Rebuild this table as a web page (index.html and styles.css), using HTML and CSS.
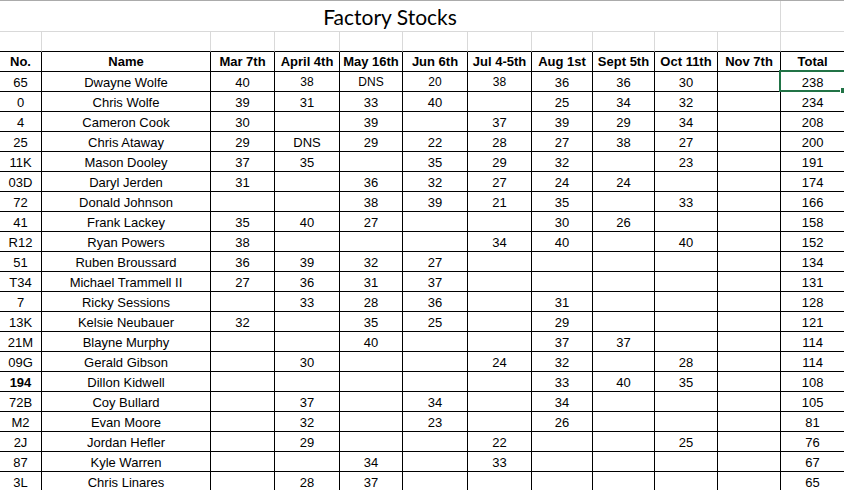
FILE: index.html
```html
<!DOCTYPE html>
<html>
<head>
<meta charset="utf-8">
<link rel="stylesheet" href="styles.css">
</head>
<body>
<div class="sheet">
<table class="grid">
  <colgroup>
    <col class="c-no"><col class="c-name"><col class="c-64"><col class="c-65"><col class="c-63"><col class="c-65"><col class="c-64"><col class="c-61"><col class="c-62"><col class="c-63"><col class="c-63"><col class="c-total">
  </colgroup>
  <tr class="title-row">
    <td colspan="11" class="title">Factory Stocks</td>
    <td class="gray"></td>
  </tr>
  <tr class="blank-row">
    <td></td><td></td><td></td><td></td><td></td><td></td><td></td><td></td><td></td><td></td><td></td><td></td>
  </tr>
  <tr class="head">
    <td>No.</td><td>Name</td><td>Mar 7th</td><td>April 4th</td><td>May 16th</td><td>Jun 6th</td><td>Jul 4-5th</td><td>Aug 1st</td><td>Sept 5th</td><td>Oct 11th</td><td>Nov 7th</td><td>Total</td>
  </tr>
  <tr><td>65</td><td>Dwayne Wolfe</td><td>40</td><td class="sm">38</td><td class="sm">DNS</td><td class="sm">20</td><td class="sm">38</td><td>36</td><td>36</td><td>30</td><td></td><td class="sel">238<span class="selbox"><span class="handle"></span></span></td></tr>
  <tr><td>0</td><td>Chris Wolfe</td><td>39</td><td>31</td><td>33</td><td>40</td><td></td><td>25</td><td>34</td><td>32</td><td></td><td>234</td></tr>
  <tr><td>4</td><td>Cameron Cook</td><td>30</td><td></td><td>39</td><td></td><td>37</td><td>39</td><td>29</td><td>34</td><td></td><td>208</td></tr>
  <tr><td>25</td><td>Chris Ataway</td><td>29</td><td>DNS</td><td>29</td><td>22</td><td>28</td><td>27</td><td>38</td><td>27</td><td></td><td>200</td></tr>
  <tr><td>11K</td><td>Mason Dooley</td><td>37</td><td>35</td><td></td><td>35</td><td>29</td><td>32</td><td></td><td>23</td><td></td><td>191</td></tr>
  <tr><td>03D</td><td>Daryl Jerden</td><td>31</td><td></td><td>36</td><td>32</td><td>27</td><td>24</td><td>24</td><td></td><td></td><td>174</td></tr>
  <tr><td>72</td><td>Donald Johnson</td><td></td><td></td><td>38</td><td>39</td><td>21</td><td>35</td><td></td><td>33</td><td></td><td>166</td></tr>
  <tr><td>41</td><td>Frank Lackey</td><td>35</td><td>40</td><td>27</td><td></td><td></td><td>30</td><td>26</td><td></td><td></td><td>158</td></tr>
  <tr><td>R12</td><td>Ryan Powers</td><td>38</td><td></td><td></td><td></td><td>34</td><td>40</td><td></td><td>40</td><td></td><td>152</td></tr>
  <tr><td>51</td><td>Ruben Broussard</td><td>36</td><td>39</td><td>32</td><td>27</td><td></td><td></td><td></td><td></td><td></td><td>134</td></tr>
  <tr><td>T34</td><td>Michael Trammell II</td><td>27</td><td>36</td><td>31</td><td>37</td><td></td><td></td><td></td><td></td><td></td><td>131</td></tr>
  <tr><td>7</td><td>Ricky Sessions</td><td></td><td>33</td><td>28</td><td>36</td><td></td><td>31</td><td></td><td></td><td></td><td>128</td></tr>
  <tr><td>13K</td><td>Kelsie Neubauer</td><td>32</td><td></td><td>35</td><td>25</td><td></td><td>29</td><td></td><td></td><td></td><td>121</td></tr>
  <tr><td>21M</td><td>Blayne Murphy</td><td></td><td></td><td>40</td><td></td><td></td><td>37</td><td>37</td><td></td><td></td><td>114</td></tr>
  <tr><td>09G</td><td>Gerald Gibson</td><td></td><td>30</td><td></td><td></td><td>24</td><td>32</td><td></td><td>28</td><td></td><td>114</td></tr>
  <tr><td class="b">194</td><td>Dillon Kidwell</td><td></td><td></td><td></td><td></td><td></td><td>33</td><td>40</td><td>35</td><td></td><td>108</td></tr>
  <tr><td>72B</td><td>Coy Bullard</td><td></td><td>37</td><td></td><td>34</td><td></td><td>34</td><td></td><td></td><td></td><td>105</td></tr>
  <tr><td>M2</td><td>Evan Moore</td><td></td><td>32</td><td></td><td>23</td><td></td><td>26</td><td></td><td></td><td></td><td>81</td></tr>
  <tr><td>2J</td><td>Jordan Hefler</td><td></td><td>29</td><td></td><td></td><td>22</td><td></td><td></td><td>25</td><td></td><td>76</td></tr>
  <tr><td>87</td><td>Kyle Warren</td><td></td><td></td><td>34</td><td></td><td>33</td><td></td><td></td><td></td><td></td><td>67</td></tr>
  <tr><td>3L</td><td>Chris Linares</td><td></td><td>28</td><td>37</td><td></td><td></td><td></td><td></td><td></td><td></td><td>65</td></tr>
</table>
</div>
</body>
</html>
```

FILE: styles.css
```css
html, body {
  margin: 0;
  padding: 0;
  background: #ffffff;
  overflow: hidden;
}
.sheet {
  width: 844px;
  height: 490px;
  overflow: hidden;
  border-top: 1px solid #ababab;
  position: relative;
}
.sheet::after {
  content: "";
  position: absolute;
  left: 780px;
  top: -1px;
  width: 64px;
  height: 1px;
  background: #217346;
}
.grid {
  border-collapse: separate;
  border-spacing: 0;
  table-layout: fixed;
  width: 845px;
  font-family: "Liberation Sans", Arial, sans-serif;
  font-size: 13px;
  color: #000;
}
.c-no { width: 42px; }
.c-name { width: 169px; }
.c-64 { width: 64px; }
.c-65 { width: 65px; }
.c-63 { width: 63px; }
.c-61 { width: 61px; }
.c-62 { width: 62px; }
.c-total { width: 64px; }
.grid td {
  box-sizing: border-box;
  padding: 2px 0 0;
  line-height: 17px;
  height: 20px;
  text-align: center;
  vertical-align: top;
  white-space: nowrap;
  overflow: hidden;
  border-right: 1px solid #000;
  border-bottom: 1px solid #000;
}
.grid tr { height: 20px; }
.title-row { height: 31px; }
.title-row td {
  height: 31px;
  border-right: none;
  border-bottom: 1px solid #d9d9d9;
}
.title-row td.title {
  border-right: 1px solid #d9d9d9;
  font-family: Lato, "Open Sans", sans-serif;
  font-size: 21px;
  line-height: 24px;
  padding-top: 4px;
  overflow: visible;
}
.blank-row td {
  border-right: 1px solid #d9d9d9;
  border-bottom: 1px solid #000;
}
.head td {
  font-weight: bold;
  padding-top: 1px;
}
.grid td.sm { font-size: 12px; }
.b { font-weight: bold; }
.grid td.sel {
  position: relative;
  overflow: visible;
}
.selbox {
  position: absolute;
  left: -2px;
  top: -2px;
  width: 70px;
  height: 22px;
  box-sizing: border-box;
  border: 2px solid #217346;
}
.handle {
  position: absolute;
  left: 59px;
  top: 15px;
  width: 5px;
  height: 5px;
  background: #217346;
  border: 1px solid #fff;
}
```
